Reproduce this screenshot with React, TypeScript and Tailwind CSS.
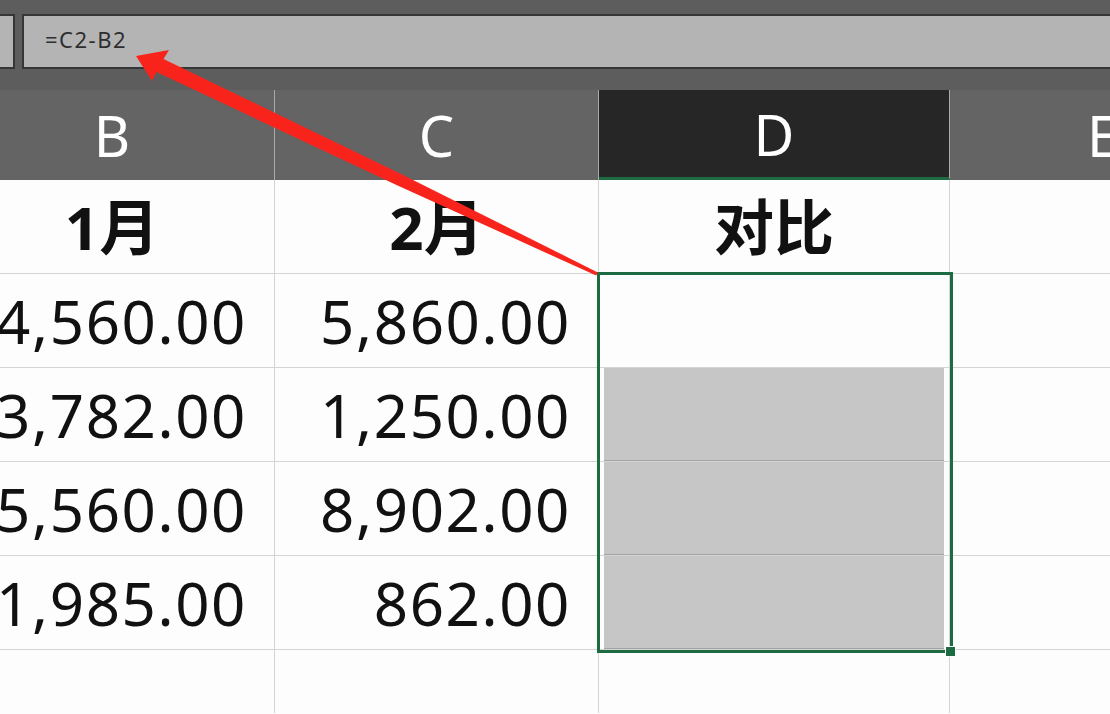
import React from 'react';

// ---------- Data ----------
const rows = [
  { b: '4,560.00', c: '5,860.00' },
  { b: '3,782.00', c: '1,250.00' },
  { b: '5,560.00', c: '8,902.00' },
  { b: '1,985.00', c: '862.00' },
];

const numFont = { fontFamily: '"Noto Sans", "Open Sans", sans-serif' };
const cjkFont = { fontFamily: '"Noto Sans", "Noto Sans CJK SC", sans-serif' };

// ---------- Arrow overlay ----------
const Arrow = () => (
  <svg className="absolute left-0 top-0 pointer-events-none" width="1110" height="714" viewBox="0 0 1110 714">
    <polygon
      fill="#f8241b"
      points="136,56 169,50 163.5,59 402,174.5 597.8,272.4 596.2,275.6 397.6,185.5 156.5,72 152,81"
    />
  </svg>
);

// ---------- Page Component ----------
export default function App() {
  return (
    <div className="relative w-[1110px] h-[714px] overflow-hidden bg-[#fdfdfd]">
      {/* --- Formula bar --- */}
      <div className="h-[90px] bg-[#5d5d5d] pt-[14px] flex gap-[7px]">
        <div className="-ml-[10px] w-[25px] h-[55px] bg-[#b4b4b4] border-2 border-[#363636]" />
        <div className="flex-1 -mr-[10px] h-[55px] bg-[#b4b4b4] border-2 border-[#363636] flex items-center pl-[21px] pb-[4px]">
          <span className="text-[22px] text-[#2e2e2e] tracking-[1.5px]" style={numFont}>=C2-B2</span>
        </div>
      </div>

      {/* --- Column headers --- */}
      <div className="flex h-[90px] bg-[#646464] text-white text-[56px] font-normal" style={numFont}>
        <div className="-ml-[50px] w-[325px] shrink-0 flex items-center justify-center border-r border-[#a9a9a9]">B</div>
        <div className="w-[324px] shrink-0 flex items-center justify-center border-r border-[#a9a9a9]">C</div>
        <div className="w-[351px] shrink-0 flex items-center justify-center bg-[#262626] border-r border-[#a9a9a9] border-b-[3px] border-b-[#1d6b40]">D</div>
        <div className="flex-1 flex items-center pl-[137px]">E</div>
      </div>

      {/* --- Title row --- */}
      <div className="flex h-[94px] border-b border-[#d4d4d4] text-[60px] font-bold text-[#111]" style={cjkFont}>
        <div className="-ml-[50px] w-[325px] shrink-0 flex items-center justify-center border-r border-[#d4d4d4]">1月</div>
        <div className="w-[324px] shrink-0 flex items-center justify-center border-r border-[#d4d4d4]">2月</div>
        <div className="w-[351px] shrink-0 flex items-center justify-center border-r border-[#d4d4d4]">对比</div>
        <div className="flex-1" />
      </div>

      {/* --- Data rows --- */}
      {rows.map((r, i) => (
        <div key={i} className="flex h-[94px] border-b border-[#d4d4d4] text-[60px] text-[#111] tracking-[1.6px]" style={numFont}>
          <div className="-ml-[50px] w-[325px] shrink-0 flex items-center justify-end pr-[27px] border-r border-[#d4d4d4]">{r.b}</div>
          <div className="w-[324px] shrink-0 flex items-center justify-end pr-[27px] border-r border-[#d4d4d4]">{r.c}</div>
          <div className="w-[351px] shrink-0 border-r border-[#d4d4d4] px-[5px]">
            {i > 0 && <div className="h-full bg-[#c6c6c6] border-b border-[#a3a3a3]" />}
          </div>
          <div className="flex-1" />
        </div>
      ))}

      {/* --- Empty row --- */}
      <div className="flex h-[63px]">
        <div className="-ml-[50px] w-[325px] shrink-0 border-r border-[#d4d4d4]" />
        <div className="w-[324px] shrink-0 border-r border-[#d4d4d4]" />
        <div className="w-[351px] shrink-0 border-r border-[#d4d4d4]" />
        <div className="flex-1" />
      </div>

      {/* --- Selection range D2:D5 --- */}
      <div className="absolute left-[597px] top-[272px] w-[356px] h-[381px] border-[3px] border-[#1d6b40] pointer-events-none" />
      <div className="absolute left-[945px] top-[646px] w-[11px] h-[11px] bg-[#1d6b40] border border-white" />

      <Arrow />
    </div>
  );
}
